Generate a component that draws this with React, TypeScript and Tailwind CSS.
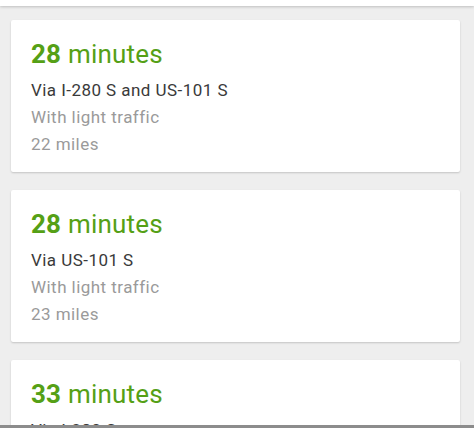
const routes = [
  { minutes: 28, via: 'Via I-280 S and US-101 S', traffic: 'With light traffic', miles: '22 miles' },
  { minutes: 28, via: 'Via US-101 S', traffic: 'With light traffic', miles: '23 miles' },
  { minutes: 33, via: 'Via I-280 S', traffic: 'With light traffic', miles: '25 miles' },
];

function RouteCard({ route }: { route: (typeof routes)[number] }) {
  return (
    <div className="h-[152px] shrink-0 rounded-[2px] bg-white px-5 pt-[18px] shadow-[0_1px_2px_rgba(0,0,0,0.18)]">
      <div className="text-[26px] leading-[32px] tracking-[0.2px] text-[#55a016]">
        <span className="font-bold">{route.minutes}</span> minutes
      </div>
      <div className="mt-[7px] text-[17px] leading-[27px] tracking-[0.45px]">
        <div className="text-[#3a3a3a]">{route.via}</div>
        <div className="text-[#9a9a9a]">{route.traffic}</div>
        <div className="text-[#9a9a9a]">{route.miles}</div>
      </div>
    </div>
  );
}

export default function App() {
  return (
    <div
      className="relative h-[428px] overflow-hidden bg-[#eeeeee]"
      style={{ fontFamily: 'Roboto, "Noto Sans", sans-serif' }}
    >
      <div className="relative z-10 h-[6px] bg-white shadow-[0_1px_3px_rgba(0,0,0,0.2)]" />
      <div className="flex flex-col gap-[18px] pl-[11px] pr-[14px] pt-[14px]">
        {routes.map((r, i) => (
          <RouteCard key={i} route={r} />
        ))}
      </div>
      <div className="fixed bottom-0 left-0 right-0 h-[3px] bg-[#8c8c8c]" />
    </div>
  );
}
